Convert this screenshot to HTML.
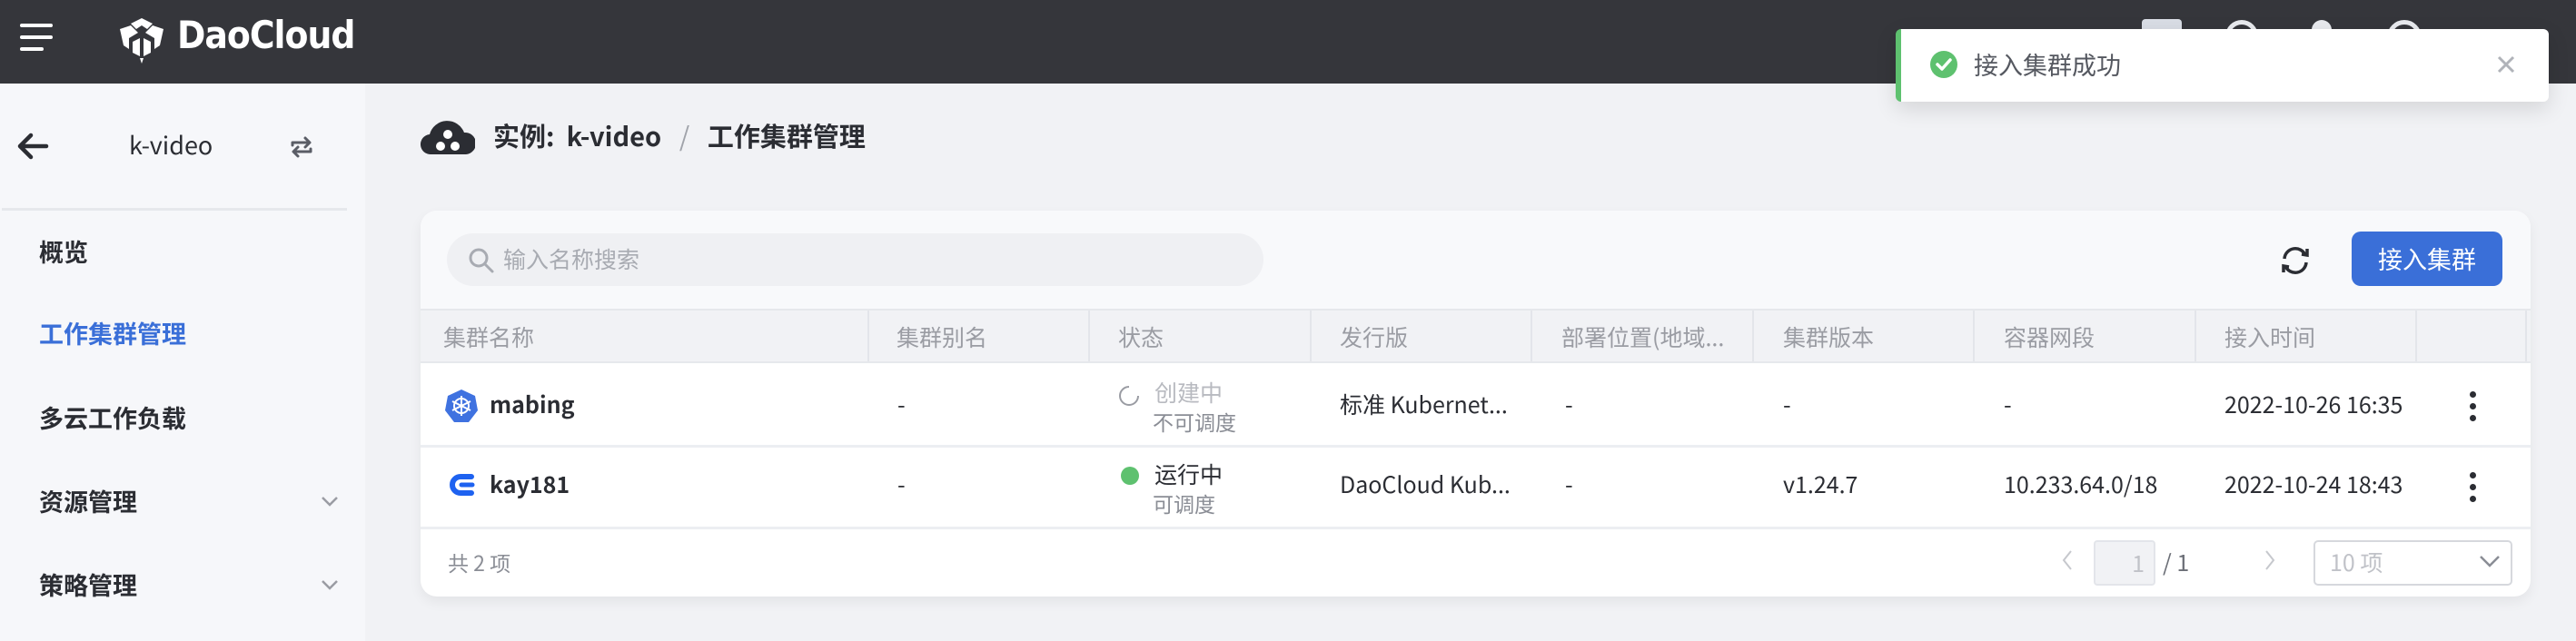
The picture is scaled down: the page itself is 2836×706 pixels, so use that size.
<!DOCTYPE html>
<html><head><meta charset="utf-8">
<style>
*{margin:0;padding:0;box-sizing:border-box}
body{width:2836px;height:706px;overflow:hidden;background:#f1f2f5;font-family:"Noto Sans CJK SC","Liberation Sans",sans-serif;position:relative;color:#2b2d33}
.abs{position:absolute}
.hdr{left:0;top:0;width:2836px;height:92px;background:#35363b}
.side{left:0;top:92px;width:402px;height:614px;background:#f6f7fa}
.menu{left:43px;font-size:27px;color:#2b2d33;line-height:36px;font-weight:bold}
.card{left:463px;top:232px;width:2323px;height:425px;background:#fff;border-radius:18px;overflow:hidden;box-shadow:0 6px 14px rgba(0,0,0,0.06)}
.th{top:108px;height:60px;background:#f1f2f5;border-top:2px solid #e6e8ec;border-bottom:2px solid #e6e8ec}
.hc{top:122px;font-size:25px;color:#9a9ca3;line-height:34px}
.sep{top:110px;width:2px;height:56px;background:#e3e5ea}
.cell{font-size:25px;line-height:34px;color:#2b2d33}
.rowline{left:0;width:2323px;height:3px;background:#eceef2}
</style></head><body>
<div class="abs hdr"></div>
<div class="abs" style="left:22px;top:26px;width:36px;height:4px;background:#fff;border-radius:2px"></div>
<div class="abs" style="left:22px;top:39px;width:36px;height:4px;background:#fff;border-radius:2px"></div>
<div class="abs" style="left:22px;top:52px;width:26px;height:4px;background:#fff;border-radius:2px"></div>
<svg class="abs" style="left:128px;top:18px" width="56" height="54" viewBox="0 0 56 54"><path d="M28 2 L40 8 L34 14 L28 10 L22 14 L16 8Z M4 14 L16 10 L24 18 L14 24 L14 36 L8 32 Z M52 14 L40 10 L32 18 L42 24 L42 36 L48 32Z M18 28 L26 24 L26 44 L18 40Z M38 28 L30 24 L30 44 L38 40Z M26 46 L30 46 L28 52Z" fill="#fff"/></svg>
<div class="abs" style="left:195px;top:14px;font-size:42px;font-weight:bold;color:#fff;letter-spacing:-1px;font-family:'DejaVu Sans Condensed','Liberation Sans',sans-serif">DaoCloud</div>
<div class="abs" style="left:2358px;top:21px;width:44px;height:30px;background:#d9dde5;border-radius:4px"></div>
<div class="abs" style="left:2450px;top:22px;width:36px;height:36px;border:5px solid #e8eaee;border-radius:50%"></div>
<div class="abs" style="left:2545px;top:22px;width:22px;height:30px;background:#e8eaee;border-radius:11px 11px 0 0"></div>
<div class="abs" style="left:2628px;top:22px;width:38px;height:38px;border:5px solid #e8eaee;border-radius:50%"></div>

<div class="abs side"></div>
<svg class="abs" style="left:18px;top:146px" width="36" height="30" viewBox="0 0 36 30"><path d="M33 15 H5 M16 3 L4 15 L16 27" stroke="#2b2d33" stroke-width="4.5" fill="none" stroke-linecap="round" stroke-linejoin="round"/></svg>
<div class="abs" style="left:142px;top:140px;font-size:27px;line-height:38px;color:#2b2d33">k-video</div>
<svg class="abs" style="left:318px;top:148px" width="28" height="28" viewBox="0 0 28 28"><path d="M4 12 V9 H22 M18 4 L23 9 L18 14 M24 16 V19 H6 M10 24 L5 19 L10 14" stroke="#5a5d66" stroke-width="3" fill="none" stroke-linecap="round" stroke-linejoin="round"/></svg>
<div class="abs" style="left:2px;top:229px;width:380px;height:3px;background:#e6e8ec"></div>
<div class="abs menu" style="top:259px">概览</div>
<div class="abs menu" style="top:349px;color:#3a6fd8">工作集群管理</div>
<div class="abs menu" style="top:442px">多云工作负载</div>
<div class="abs menu" style="top:534px">资源管理</div>
<div class="abs menu" style="top:626px">策略管理</div>
<svg class="abs" style="left:353px;top:545px" width="20" height="14"><path d="M2 3 L10 11 L18 3" stroke="#9a9ca3" stroke-width="2.5" fill="none"/></svg>
<svg class="abs" style="left:353px;top:637px" width="20" height="14"><path d="M2 3 L10 11 L18 3" stroke="#9a9ca3" stroke-width="2.5" fill="none"/></svg>

<svg class="abs" style="left:463px;top:128px" width="60" height="44" viewBox="0 0 60 44"><path d="M12 42 A11 11 0 0 1 10 20 A20 20 0 0 1 48 18 A12 12 0 0 1 50 42 Z" fill="#2b2d33"/><circle cx="30" cy="20" r="5" fill="#fff"/><circle cx="22" cy="33" r="5" fill="#fff"/><circle cx="38" cy="33" r="5" fill="#fff"/></svg>
<div class="abs" style="left:543px;top:129px;font-size:29px;line-height:40px;font-weight:bold;color:#2b2d33;white-space:pre">实例:  k-video  <span style="color:#a0a3aa;font-weight:normal"> / </span>  工作集群管理</div>

<div class="abs card">
  <div class="abs" style="left:0;top:0;width:2323px;height:108px;background:#f8f9fb"></div>
  <div class="abs" style="left:29px;top:25px;width:899px;height:58px;background:#eff0f3;border-radius:29px"></div>
  <svg class="abs" style="left:52px;top:40px" width="30" height="30" viewBox="0 0 30 30"><circle cx="12" cy="12" r="9" stroke="#a8abb2" stroke-width="3" fill="none"/><path d="M19 19 L27 27" stroke="#a8abb2" stroke-width="3" stroke-linecap="round"/></svg>
  <div class="abs" style="left:91px;top:36px;font-size:25px;line-height:34px;color:#a8abb2">输入名称搜索</div>
  <svg class="abs" style="left:2045px;top:36px" width="38" height="38" viewBox="0 0 38 38"><path d="M7 17 A12 12 0 0 1 30 13 M31 21 A12 12 0 0 1 8 25" stroke="#2b2d33" stroke-width="3.5" fill="none"/><path d="M26 12 L32 13 L32 6" stroke="#2b2d33" stroke-width="3.5" fill="none"/><path d="M12 26 L6 25 L6 32" stroke="#2b2d33" stroke-width="3.5" fill="none"/></svg>
  <div class="abs" style="left:2126px;top:23px;width:166px;height:60px;background:#3a6fd8;border-radius:10px;color:#fff;font-size:27px;text-align:center;line-height:60px">接入集群</div>

  <div class="abs th" style="left:0;width:2323px"></div>
  <div class="abs hc" style="left:25px">集群名称</div>
  <div class="abs sep" style="left:492px"></div><div class="abs hc" style="left:524px">集群别名</div>
  <div class="abs sep" style="left:735px"></div><div class="abs hc" style="left:768px">状态</div>
  <div class="abs sep" style="left:979px"></div><div class="abs hc" style="left:1012px">发行版</div>
  <div class="abs sep" style="left:1222px"></div><div class="abs hc" style="left:1256px">部署位置(地域...</div>
  <div class="abs sep" style="left:1466px"></div><div class="abs hc" style="left:1500px">集群版本</div>
  <div class="abs sep" style="left:1709px"></div><div class="abs hc" style="left:1743px">容器网段</div>
  <div class="abs sep" style="left:1953px"></div><div class="abs hc" style="left:1986px">接入时间</div>
  <div class="abs sep" style="left:2196px"></div>
  <div class="abs sep" style="left:2317px"></div>

  <svg class="abs" style="left:27px;top:196px" width="36" height="38" viewBox="0 0 36 38"><path d="M18 1 L33 8 L36 24 L26 37 L10 37 L0 24 L3 8Z" fill="#3f72e0"/><circle cx="18" cy="19" r="8" stroke="#fff" stroke-width="2" fill="none"/><path d="M18 8 V30 M8 14 L28 24 M8 24 L28 14" stroke="#fff" stroke-width="2"/></svg>
  <div class="abs cell" style="left:76px;top:196px;font-weight:bold">mabing</div>
  <div class="abs cell" style="left:525px;top:196px">-</div>
  <svg class="abs" style="left:767px;top:191px" width="26" height="26" viewBox="0 0 26 26"><path d="M13 3 A10 10 0 1 0 23 13" stroke="#9a9ca3" stroke-width="2" fill="none"/></svg>
  <div class="abs cell" style="left:808px;top:183px;color:#b8bac0">创建中</div>
  <div class="abs cell" style="left:806px;top:215px;color:#8a8d95;font-size:23px">不可调度</div>
  <div class="abs cell" style="left:1012px;top:196px">标准 Kubernet...</div>
  <div class="abs cell" style="left:1260px;top:196px">-</div>
  <div class="abs cell" style="left:1500px;top:196px">-</div>
  <div class="abs cell" style="left:1743px;top:196px">-</div>
  <div class="abs cell" style="left:1986px;top:196px;width:205px;overflow:hidden;white-space:nowrap">2022-10-26 16:35</div>
  <div class="abs" style="left:2256px;top:199px;width:7px;height:7px;border-radius:50%;background:#2b2d33;box-shadow:0 13px 0 #2b2d33,0 26px 0 #2b2d33"></div>
  <div class="abs rowline" style="top:258px"></div>

  <svg class="abs" style="left:28px;top:285px" width="34" height="34" viewBox="0 0 34 34"><path d="M28 8 H16 A9 9 0 0 0 16 26 H28" stroke="#1e62f0" stroke-width="6" fill="none" stroke-linecap="round"/><path d="M17 17 H29" stroke="#1e62f0" stroke-width="5" stroke-linecap="round"/></svg>
  <div class="abs cell" style="left:76px;top:284px;font-weight:bold">kay181</div>
  <div class="abs cell" style="left:525px;top:284px">-</div>
  <div class="abs" style="left:771px;top:282px;width:20px;height:20px;border-radius:50%;background:#5ec16f"></div>
  <div class="abs cell" style="left:808px;top:273px">运行中</div>
  <div class="abs cell" style="left:806px;top:305px;color:#8a8d95;font-size:23px">可调度</div>
  <div class="abs cell" style="left:1012px;top:284px">DaoCloud Kub...</div>
  <div class="abs cell" style="left:1260px;top:284px">-</div>
  <div class="abs cell" style="left:1500px;top:284px">v1.24.7</div>
  <div class="abs cell" style="left:1743px;top:284px">10.233.64.0/18</div>
  <div class="abs cell" style="left:1986px;top:284px;width:205px;overflow:hidden;white-space:nowrap">2022-10-24 18:43</div>
  <div class="abs" style="left:2256px;top:288px;width:7px;height:7px;border-radius:50%;background:#2b2d33;box-shadow:0 13px 0 #2b2d33,0 26px 0 #2b2d33"></div>
  <div class="abs rowline" style="top:348px"></div>

  <div class="abs" style="left:30px;top:370px;font-size:23px;line-height:34px;color:#8a8d95">共 2 项</div>
  <svg class="abs" style="left:1805px;top:372px" width="16" height="26"><path d="M12 3 L4 13 L12 23" stroke="#c6c8cd" stroke-width="2" fill="none"/></svg>
  <div class="abs" style="left:1842px;top:363px;width:68px;height:50px;background:#f1f2f5;border:2px solid #e3e5ea;border-radius:4px;text-align:right;padding-right:10px;font-size:25px;line-height:46px;color:#c0c2c8">1</div>
  <div class="abs" style="left:1918px;top:370px;font-size:25px;line-height:34px;color:#6c6f77">/ 1</div>
  <svg class="abs" style="left:2028px;top:372px" width="16" height="26"><path d="M4 3 L12 13 L4 23" stroke="#c6c8cd" stroke-width="2" fill="none"/></svg>
  <div class="abs" style="left:2084px;top:363px;width:219px;height:50px;border:2px solid #d6d8dd;border-radius:5px"></div>
  <div class="abs" style="left:2102px;top:370px;font-size:25px;line-height:34px;color:#c0c2c8">10 项</div>
  <svg class="abs" style="left:2266px;top:378px" width="24" height="16"><path d="M2 3 L12 13 L22 3" stroke="#8a8d95" stroke-width="2.5" fill="none"/></svg>
</div>

<div class="abs" style="left:2087px;top:32px;width:719px;height:80px;background:#fff;border-radius:6px;border-left:6px solid #5ec16f;box-shadow:0 8px 24px rgba(0,0,0,0.12)"></div>
<svg class="abs" style="left:2125px;top:56px" width="30" height="30" viewBox="0 0 30 30"><circle cx="15" cy="15" r="15" fill="#5ec16f"/><path d="M8 15 L13 20 L22 10" stroke="#fff" stroke-width="3.5" fill="none" stroke-linecap="round" stroke-linejoin="round"/></svg>
<div class="abs" style="left:2173px;top:52px;font-size:27px;line-height:38px;color:#555860">接入集群成功</div>
<svg class="abs" style="left:2748px;top:60px" width="22" height="22"><path d="M3 3 L19 19 M19 3 L3 19" stroke="#b0b3b9" stroke-width="3"/></svg>
</body></html>
